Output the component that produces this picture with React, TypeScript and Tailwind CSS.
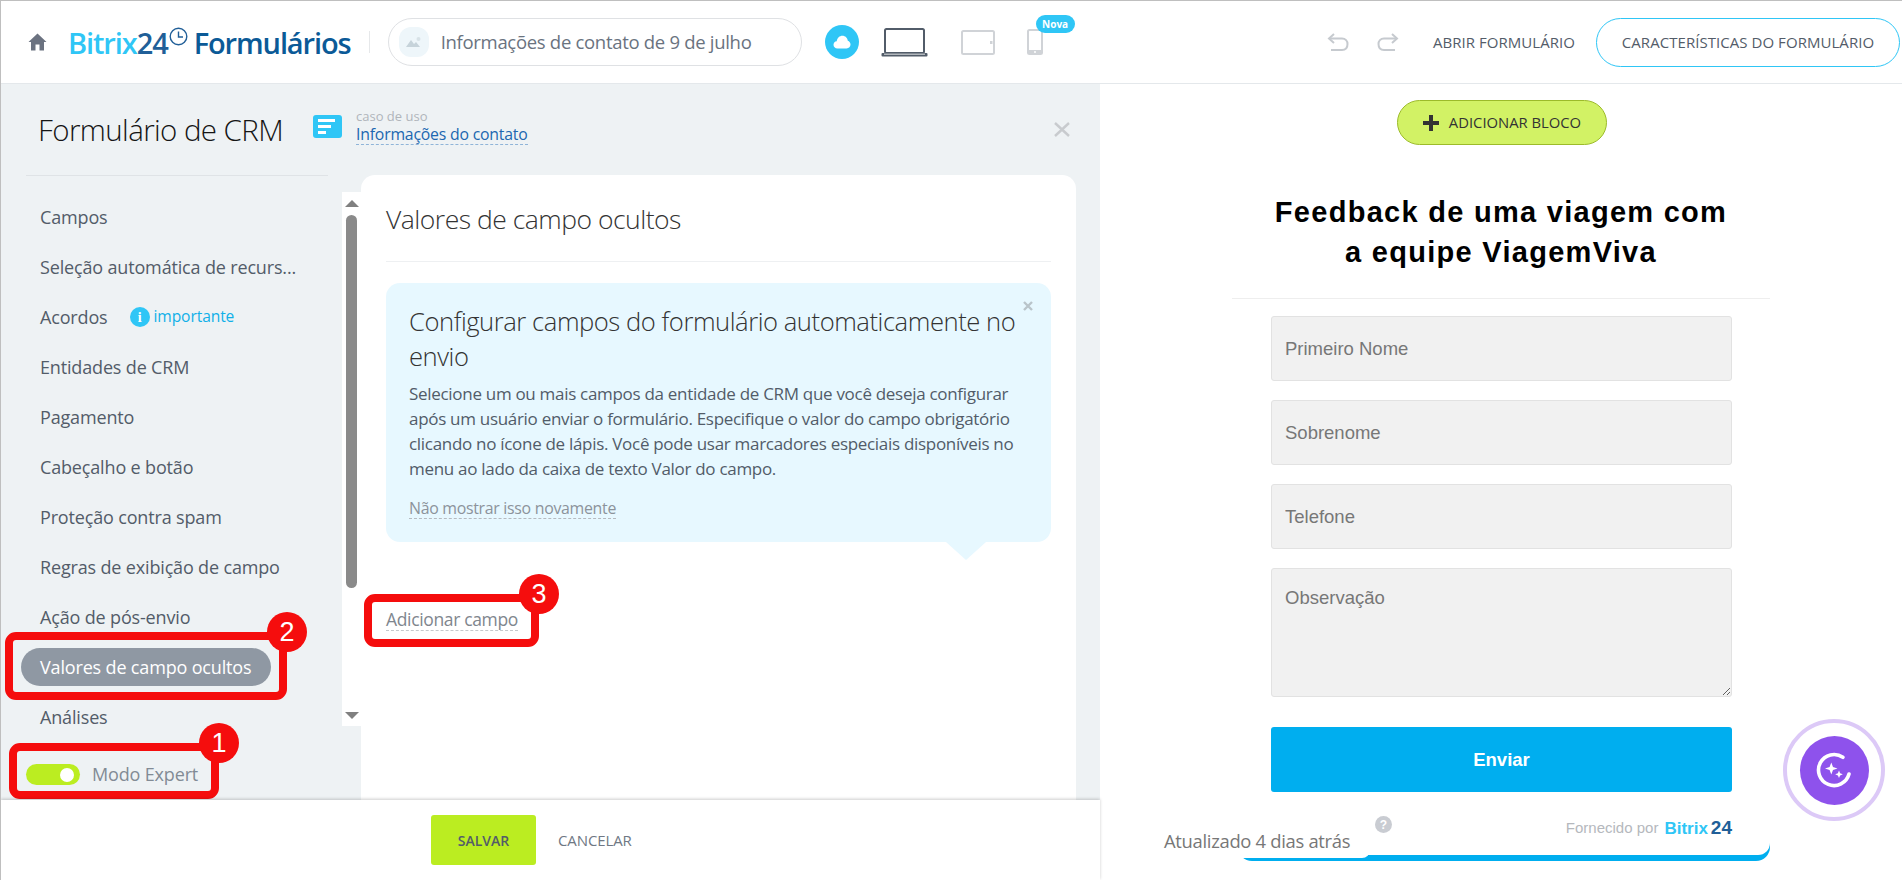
import React from "react";

const sans = "font-['Open_Sans',sans-serif]";

const menu = [
  "Campos",
  "Seleção automática de recurs...",
  "Acordos",
  "Entidades de CRM",
  "Pagamento",
  "Cabeçalho e botão",
  "Proteção contra spam",
  "Regras de exibição de campo",
  "Ação de pós-envio",
  "Valores de campo ocultos",
  "Análises",
];

function Home() {
  return (
    <svg width="19" height="18" viewBox="0 0 19 18" className="shrink-0">
      <path d="M9.5 0.5 L0.5 9 H3 V17.5 H7.5 V11.5 H11.5 V17.5 H16 V9 H18.5 Z" fill="#6b7280" />
    </svg>
  );
}

function Logo() {
  return (
    <div className="flex items-center ml-[21px] font-['Open_Sans',sans-serif] text-[29px] font-semibold tracking-[-1.1px] leading-none">
      <span className="text-[#2fc6f6]">Bitrix</span>
      <span className="text-[#215f98]">24</span>
      <svg width="19" height="19" viewBox="0 0 19 19" className="mb-[12px] ml-[1px]">
        <circle cx="9.5" cy="9.5" r="8.3" fill="none" stroke="#215f98" strokeWidth="1.4" />
        <path d="M9.5 4.5 V10 H14" fill="none" stroke="#215f98" strokeWidth="1.4" />
      </svg>
      <span className="text-[#0b5a97] ml-[6px]">Formulários</span>
    </div>
  );
}

function Laptop() {
  return (
    <svg width="47" height="29" viewBox="0 0 47 29" className="ml-[22px]">
      <rect x="4" y="1" width="39" height="24" rx="1.5" fill="none" stroke="#525c69" strokeWidth="2" />
      <rect x="0.5" y="25" width="46" height="3.5" rx="1" fill="#525c69" />
      <rect x="3" y="25.6" width="41" height="1.2" fill="#c9ccd0" />
    </svg>
  );
}

function Tablet() {
  return (
    <svg width="34" height="25" viewBox="0 0 34 25" className="ml-[33px]">
      <rect x="1" y="1" width="32" height="23" rx="1.5" fill="none" stroke="#d0d3d7" strokeWidth="2" />
      <rect x="29" y="11" width="2.5" height="3" fill="#d0d3d7" />
    </svg>
  );
}

function Phone() {
  return (
    <svg width="16" height="26" viewBox="0 0 16 26">
      <rect x="1" y="1" width="14" height="24" rx="1.5" fill="none" stroke="#d0d3d7" strokeWidth="2" />
      <rect x="1" y="21" width="14" height="4" fill="#d0d3d7" />
      <circle cx="8" cy="23" r="1" fill="#fff" />
    </svg>
  );
}

function Header() {
  return (
    <header className={`h-[83px] shrink-0 flex items-center bg-white border-b border-[#e4e8eb] pl-[27px] pr-[2px] ${sans}`}>
      <Home />
      <Logo />
      <div className="w-px h-[22px] bg-[#e6e8ea] ml-[18px]" />
      <div className="ml-[18px] w-[414px] h-[48px] rounded-[24px] border border-[#dfe1e4] flex items-center pl-[10px]">
        <div className="w-[30px] h-[30px] rounded-[12px] bg-[#eef6fa] flex items-center justify-center">
          <svg width="16" height="12" viewBox="0 0 16 12">
            <path d="M0 11 L5 4 L8 8 L10 6 L14 11 Z" fill="#c6d3da" />
            <circle cx="12.5" cy="3" r="2" fill="#d8e2e7" />
          </svg>
        </div>
        <span className="ml-[12px] text-[18.5px] tracking-[-0.3px] text-[#6a737f] whitespace-nowrap">Informações de contato de 9 de julho</span>
      </div>
      <div className="ml-[23px] w-[34px] h-[34px] rounded-full bg-[#2fc6f6] flex items-center justify-center">
        <svg width="18" height="14" viewBox="0 0 18 14">
          <path d="M4.5 13.5 C2 13.5 0.5 11.8 0.5 9.8 C0.5 7.9 1.9 6.4 3.7 6.3 C4.2 3 6.6 0.8 9.4 0.8 C12.3 0.8 14.5 3 14.8 5.8 C16.4 6.2 17.5 7.8 17.5 9.6 C17.5 11.8 15.9 13.5 13.6 13.5 Z" fill="#fff" />
        </svg>
      </div>
      <Laptop />
      <Tablet />
      <div className="relative ml-[32px]">
        <Phone />
        <span className="absolute left-[9px] top-[-14px] w-[39px] h-[18px] rounded-[9px] bg-[#2fc6f6] text-white text-[10px] font-bold flex items-center justify-center">Nova</span>
      </div>
      <div className="ml-auto flex items-center">
        <svg width="22" height="18" viewBox="0 0 22 18">
          <path d="M7 1 L2 5.5 L7 10" fill="none" stroke="#c6cacf" strokeWidth="2" />
          <path d="M2.5 5.5 H15 C18.5 5.5 20.5 8 20.5 11 C20.5 14.5 18.5 17 15 17 H4" fill="none" stroke="#c6cacf" strokeWidth="2" />
        </svg>
        <svg width="22" height="18" viewBox="0 0 22 18" className="ml-[28px]">
          <path d="M15 1 L20 5.5 L15 10" fill="none" stroke="#c6cacf" strokeWidth="2" />
          <path d="M19.5 5.5 H7 C3.5 5.5 1.5 8 1.5 11 C1.5 14.5 3.5 17 7 17 H18" fill="none" stroke="#c6cacf" strokeWidth="2" />
        </svg>
        <span className="ml-[34px] text-[15px] tracking-[0.05px] font-normal text-[#535c69] whitespace-nowrap">ABRIR FORMULÁRIO</span>
        <div className="ml-[21px] w-[304px] h-[49px] rounded-[25px] border border-[#2fc6f6] flex items-center justify-center text-[15px] tracking-[0.05px] font-normal text-[#535c69] whitespace-nowrap">
          CARACTERÍSTICAS DO FORMULÁRIO
        </div>
      </div>
    </header>
  );
}

function TitleRow() {
  return (
    <div className="h-[91px] shrink-0 flex items-center pl-[37px] pr-[30px]">
      <h1 className="text-[29.5px] font-light text-[#151515] tracking-[-0.6px] whitespace-nowrap mt-[2px]">Formulário de CRM</h1>
      <div className="ml-[30px] w-[29px] h-[23px] rounded-[3px] bg-[#2fc6f6] flex flex-col justify-center gap-[3px] pl-[5px] mb-[6px]">
        <div className="w-[17px] h-[3px] bg-white" />
        <div className="w-[13px] h-[3px] bg-white" />
        <div className="w-[8px] h-[3px] bg-white" />
      </div>
      <div className="ml-[14px] flex flex-col leading-none mb-[4px]">
        <span className="text-[13px] text-[#b0b5bb]">caso de uso</span>
        <span className="mt-[4px] text-[15.8px] tracking-[-0.2px] text-[#2067b0] border-b border-dashed border-[#8fb4d8] pb-[1px]">Informações do contato</span>
      </div>
      <svg width="16" height="15" viewBox="0 0 16 15" className="ml-auto">
        <path d="M1 1 L15 14 M15 1 L1 14" stroke="#c8cbce" strokeWidth="2.4" />
      </svg>
    </div>
  );
}

function Scrollbar() {
  return (
    <div className="w-[19px] h-[534px] bg-white shrink-0 flex flex-col items-center pt-[8px] pb-[7px]">
      <div className="w-0 h-0 border-x-[7px] border-x-transparent border-b-[7px] border-b-[#808080]" />
      <div className="w-[11px] h-[373px] mt-[8px] rounded-[6px] bg-[#8a8a8a]" />
      <div className="mt-auto w-0 h-0 border-x-[7px] border-x-transparent border-t-[7px] border-t-[#808080]" />
    </div>
  );
}

function Sidebar() {
  return (
    <aside className="w-[360px] shrink-0 flex flex-col">
      <div className="ml-[25px] w-[302px] h-px bg-[#dfe3e6]" />
      <div className="flex items-start mt-[16px]">
        <nav className="w-[341px] shrink-0 flex flex-col">
          {menu.map((m) =>
            m === "Valores de campo ocultos" ? (
              <div key={m} className="h-[50px] flex items-center pl-[20px]">
                <div className="w-[250px] h-[38px] rounded-[19px] bg-[#8f98a3] text-white text-[18px] tracking-[-0.16px] flex items-center pl-[19px] whitespace-nowrap">{m}</div>
              </div>
            ) : (
              <div key={m} className="h-[50px] flex items-center pl-[39px] text-[18px] tracking-[-0.16px] text-[#535c69] whitespace-nowrap">
                {m}
                {m === "Acordos" && (
                  <>
                    <span className="ml-[22px] w-[20px] h-[20px] rounded-full bg-[#2fc6f6] text-white text-[14px] font-bold flex items-center justify-center font-['Liberation_Serif',serif]">i</span>
                    <span className="ml-[4px] text-[15.6px] tracking-[-0.1px] text-[#11b0e8]">importante</span>
                  </>
                )}
              </div>
            )
          )}
        </nav>
        <Scrollbar />
      </div>
      <div className="flex items-center ml-[25px] mt-[19px]">
        <div className="w-[54px] h-[21px] rounded-full bg-[#bbed21] flex items-center justify-end pr-[6px]">
          <div className="w-[14px] h-[14px] rounded-full bg-white" />
        </div>
        <span className="ml-[12px] text-[18px] tracking-[-0.16px] text-[#828b95]">Modo Expert</span>
      </div>
    </aside>
  );
}

function Card() {
  return (
    <section className="w-[715px] shrink-0 bg-white rounded-t-[14px] px-[25px]">
      <h2 className="h-[87px] flex items-center text-[26.5px] font-light tracking-[-0.5px] text-[#333] pt-[3px] border-b border-[#eef0f2] whitespace-nowrap">Valores de campo ocultos</h2>
      <div className="relative mt-[21px] w-[665px] h-[259px] rounded-[14px] bg-[#e7f8ff] px-[23px] pt-[21px]">
        <svg width="10" height="10" viewBox="0 0 10 10" className="absolute right-[18px] top-[18px]">
          <path d="M1 1 L9 9 M9 1 L1 9" stroke="#b9c4ca" strokeWidth="2.4" />
        </svg>
        <h3 className="text-[25.6px] font-light leading-[35px] tracking-[-0.45px] text-[#333]">Configurar campos do formulário automaticamente no envio</h3>
        <p className="mt-[7px] text-[17px] leading-[25px] tracking-[-0.3px] text-[#525c69]">
          Selecione um ou mais campos da entidade de CRM que você deseja configurar após um usuário enviar o formulário. Especifique o valor do campo obrigatório clicando no ícone de lápis. Você pode usar marcadores especiais disponíveis no menu ao lado da caixa de texto Valor do campo.
        </p>
        <span className="inline-block mt-[18px] text-[15.9px] tracking-[-0.3px] text-[#8c939b] border-b border-dashed border-[#b5bac0] leading-[19px]">Não mostrar isso novamente</span>
        <div className="absolute left-[560px] top-full w-0 h-0 border-x-[20px] border-x-transparent border-t-[18px] border-t-[#e7f8ff]" />
      </div>
      <span className="inline-block mt-[67px] text-[17.5px] tracking-[-0.35px] text-[#80868e] border-b border-dashed border-[#c4c8cc] leading-[21px]">Adicionar campo</span>
    </section>
  );
}

function Footer() {
  return (
    <footer className="h-[80px] shrink-0 bg-white shadow-[0_-1px_3px_rgba(0,0,0,0.2)] flex items-center pl-[430px] z-10 relative">
      <div className="w-[105px] h-[50px] rounded-[3px] bg-[#bbed21] flex items-center justify-center text-[14px] font-semibold text-[#535c69]">SALVAR</div>
      <span className="ml-[22px] text-[15px] font-normal tracking-[-0.1px] text-[#6f7884]">CANCELAR</span>
    </footer>
  );
}

function Field({ label }: { label: string }) {
  return (
    <input
      readOnly
      placeholder={label}
      className="block w-[461px] h-[65px] rounded-[3px] bg-[#f1f1f1] border border-[#e2e2e2] px-[13px] text-[18.5px] placeholder:text-[#777] font-['Liberation_Sans',sans-serif]"
    />
  );
}

function Preview() {
  return (
    <main className="relative flex-1 bg-white flex flex-col items-center font-['Liberation_Sans',sans-serif]">
      <div className={`mt-[16px] ml-[2px] w-[210px] h-[45px] rounded-[23px] bg-[#d2f265] border border-[#9cbb2a] flex items-center justify-center text-[14.8px] font-medium tracking-[0px] text-[#333] ${sans}`}>
        <svg width="16" height="16" viewBox="0 0 16 16" className="mr-[10px]">
          <path d="M8 0 V16 M0 8 H16" stroke="#333" strokeWidth="4" />
        </svg>
        ADICIONAR BLOCO
      </div>
      <h2 className="mt-[47px] text-center text-[29px] font-bold leading-[40px] tracking-[1.28px] text-black">
        Feedback de uma viagem com
        <br />a equipe ViagemViva
      </h2>
      <div className="mt-[26px] w-[538px] h-px bg-[#eeeeee]" />
      <div className="mt-[17px] ml-[1px] flex flex-col gap-[19px]">
        <Field label="Primeiro Nome" />
        <Field label="Sobrenome" />
        <Field label="Telefone" />
        <textarea
          readOnly
          placeholder="Observação"
          className="block w-[461px] h-[129px] rounded-[3px] bg-[#f1f1f1] border border-[#e2e2e2] px-[13px] py-[15px] text-[18.5px] placeholder:text-[#777]"
        />
      </div>
      <button className="mt-[30px] ml-[1px] w-[461px] h-[65px] rounded-[3px] bg-[#00aeef] text-white text-[18.5px] font-bold">Enviar</button>
      <div className="relative mt-[8px] ml-[6px] w-[532px] h-[61px]">
        <div className="absolute inset-0 rounded-b-[14px] bg-[#00aeef]" />
        <div className="absolute left-0 right-0 top-0 bottom-[6px] rounded-b-[12px] bg-white" />
        <div className="absolute left-0 w-[132px] top-0 bottom-[3px] rounded-br-[8px] bg-white" />
        <span className="absolute left-[137px] top-[16px] w-[17px] h-[17px] rounded-full bg-[#c9ccd2] text-white text-[12px] font-bold flex items-center justify-center">?</span>
        <div className="absolute right-[38px] top-[14px] flex items-center text-[15px] text-[#b5b8bd]">
          <span>Fornecido por</span>
          <span className="ml-[6px] text-[17px] font-bold text-[#2fc6f6]">Bitrix</span>
          <span className="ml-[3px] text-[19px] font-bold text-[#215f98]">24</span>
        </div>
      </div>
      <span className={`absolute left-[64px] top-[743px] text-[18.4px] tracking-[-0.3px] text-[#777] whitespace-nowrap ${sans}`}>Atualizado 4 dias atrás</span>
    </main>
  );
}

function RedBox({ className, n, badge }: { className: string; n: string; badge: string }) {
  return (
    <>
      <div className={`absolute border-[8px] border-[#f50d0d] rounded-[11px] ${className}`} />
      <div className={`absolute w-[40px] h-[40px] rounded-full bg-[#f50d0d] text-white text-[27px] font-['Liberation_Sans',sans-serif] flex items-center justify-center ${badge}`}>{n}</div>
    </>
  );
}

export default function App() {
  return (
    <div className={`relative w-[1902px] h-[880px] overflow-hidden flex flex-col bg-white border-t border-l border-[#bfbfbf] ${sans}`}>
      <Header />
      <div className="flex flex-1 min-h-0">
        <div className="w-[1099px] shrink-0 flex flex-col bg-[#eef2f4]">
          <TitleRow />
          <div className="flex flex-1 min-h-0">
            <Sidebar />
            <Card />
          </div>
          <Footer />
        </div>
        <Preview />
      </div>
      <RedBox className="left-[8px] top-[742px] w-[210px] h-[56px]" n="1" badge="left-[198px] top-[722px]" />
      <RedBox className="left-[4px] top-[631px] w-[282px] h-[68px]" n="2" badge="left-[266px] top-[611px]" />
      <RedBox className="left-[363px] top-[593px] w-[175px] h-[53px]" n="3" badge="left-[518px] top-[573px]" />
      <div className="absolute left-[1782px] top-[718px] w-[102px] h-[102px] rounded-full border-[4px] border-[#dcc9f7] flex items-center justify-center">
        <div className="w-[69px] h-[69px] rounded-full bg-[#8e52ec] flex items-center justify-center">
          <svg width="38" height="38" viewBox="0 0 38 38">
            <path d="M27.9 6.3 A15.5 15.5 0 1 0 34 23" fill="none" stroke="#fff" strokeWidth="3.6" strokeLinecap="round" />
            <path d="M16.3 11.5 L18 16 L22.5 17.5 L18 19 L16.3 23.5 L14.6 19 L10 17.5 L14.6 16 Z" fill="#fff" />
            <path d="M24 19.5 L25.1 22.2 L27.8 23.3 L25.1 24.4 L24 27 L22.9 24.4 L20.2 23.3 L22.9 22.2 Z" fill="#fff" />
          </svg>
        </div>
      </div>
    </div>
  );
}
